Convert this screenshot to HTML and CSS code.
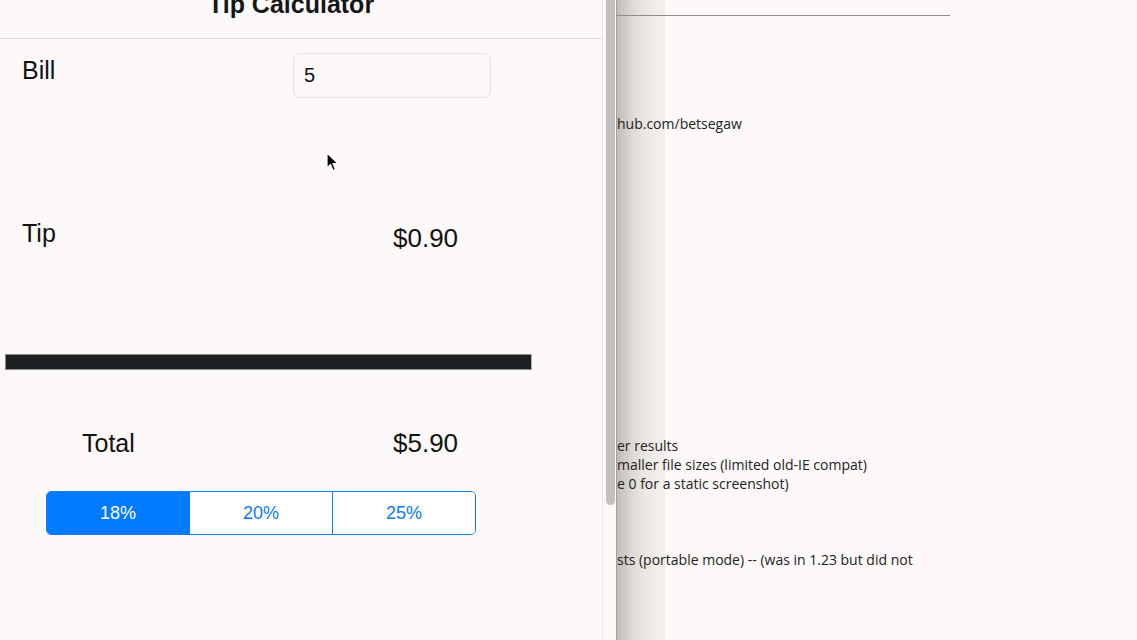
FILE: index.html
```html
<!DOCTYPE html>
<html>
<head>
<meta charset="utf-8">
<link rel="stylesheet" href="styles.css">
</head>
<body>
<div class="screen">
  <div class="left">
    <div class="header"><div class="title">Tip Calculator</div></div>
    <div class="row bill-row">
      <div class="label bill-label">Bill</div>
      <div class="input">5</div>
    </div>
    <div class="row tip-row">
      <div class="label tip-label">Tip</div>
      <div class="value tip-value">$0.90</div>
    </div>
    <div class="bar"></div>
    <div class="row total-row">
      <div class="label total-label">Total</div>
      <div class="value">$5.90</div>
    </div>
    <div class="segments">
      <div class="seg active">18%</div>
      <div class="seg">20%</div>
      <div class="seg">25%</div>
    </div>
    <svg class="cursor" width="14" height="20" viewBox="0 0 14 20">
      <path d="M1 1 L1 16 L4.5 12.5 L7 18.5 L9.5 17.5 L7 11.5 L12 11.5 Z" fill="#000" stroke="#fff" stroke-width="1.2" stroke-linejoin="round"/>
    </svg>
  </div>
  <div class="gutter"><div class="thumb"></div></div>
  <div class="right">
    <div class="rule"></div>
    <p class="line first">hub.com/betsegaw</p>
    <p class="line group">er results</p>
    <p class="line">maller file sizes (limited old-IE compat)</p>
    <p class="line">e 0 for a static screenshot)</p>
    <p class="line gap">sts (portable mode) -- (was in 1.23 but did not</p>
  </div>
</div>
</body>
</html>
```

FILE: styles.css
```css
html, body {
  margin: 0;
  padding: 0;
  background: #fcf9f8;
}
body {
  width: 1137px;
  height: 640px;
  overflow: hidden;
}
.screen {
  display: flex;
  height: 640px;
}
.left {
  position: relative;
  width: 602px;
  flex: none;
  border-right: 1px solid #ebe7e6;
  font-family: "Liberation Sans", Arial, sans-serif;
  color: #111;
  display: flex;
  flex-direction: column;
}
.header {
  height: 38px;
  border-bottom: 1px solid #dcd9d8;
  overflow: hidden;
}
.title {
  text-align: center;
  font-size: 25px;
  font-weight: bold;
  line-height: 25px;
  margin-top: -8px;
  padding-right: 20px;
  color: #161616;
}
.row {
  display: flex;
  align-items: flex-start;
  padding-left: 22px;
}
.label {
  font-size: 25px;
  line-height: 28px;
}
.bill-row {
  margin-top: 14px;
}
.bill-label {
  width: 271px;
  margin-top: 3px;
}
.input {
  box-sizing: border-box;
  width: 198px;
  height: 45px;
  border: 1px solid #e6e3e2;
  border-radius: 7px;
  padding-left: 10px;
  font-size: 20px;
  line-height: 43px;
  color: #111;
}
.tip-row {
  margin-top: 121px;
}
.tip-label {
  width: 371px;
}
.value {
  font-size: 26px;
  line-height: 28px;
}
.tip-value {
  margin-top: 5px;
}
.bar {
  margin-top: 102px;
  margin-left: 5px;
  width: 525px;
  height: 14px;
  background: #1e2124;
  border: 1px solid #8d8d8d;
  border-right-color: #b0b0b0;
}
.total-row {
  margin-top: 59px;
  padding-left: 82px;
}
.total-label {
  width: 311px;
}
.segments {
  margin-top: 34px;
  margin-left: 46px;
  width: 430px;
  height: 44px;
  box-sizing: border-box;
  border: 1.5px solid #117dff;
  border-radius: 5px;
  overflow: hidden;
  display: flex;
}
.seg {
  flex: 1;
  display: flex;
  align-items: center;
  justify-content: center;
  font-size: 18px;
  color: #0a7aff;
  background: #fff;
  border-left: 1px solid #117dff;
}
.seg:first-child {
  border-left: none;
}
.seg.active {
  background: #007aff;
  color: #fff;
}
.cursor {
  position: absolute;
  left: 326px;
  top: 152px;
}
.gutter {
  flex: none;
  box-sizing: border-box;
  padding-left: 3px;
  padding-right: 1px;
  border-right: 1px solid #a29e9b;
  width: 14px;
}
.thumb {
  width: 9px;
  height: 505px;
  background: #c2c0be;
  border-radius: 0 0 5px 5px;
}
.right {
  flex: 1;
  font-family: "Open Sans", "DejaVu Sans", sans-serif;
  font-size: 14px;
  line-height: 19px;
  color: #222;
  background-image: linear-gradient(to right, #c1bcb8 0px, #cfcbc7 8px, #dedad6 16px, #e9e5e1 26px, #efebe7 36px, #f3efeb 48px);
  background-size: 48px 100%;
  background-repeat: no-repeat;
}
.rule {
  width: 333px;
  height: 1px;
  background: #8f8c8b;
  margin-top: 15px;
}
.line {
  margin: 0;
  white-space: nowrap;
}
.line.first {
  margin-top: 98px;
}
.line.group {
  margin-top: 303px;
}
.line.gap {
  margin-top: 57px;
}
```
